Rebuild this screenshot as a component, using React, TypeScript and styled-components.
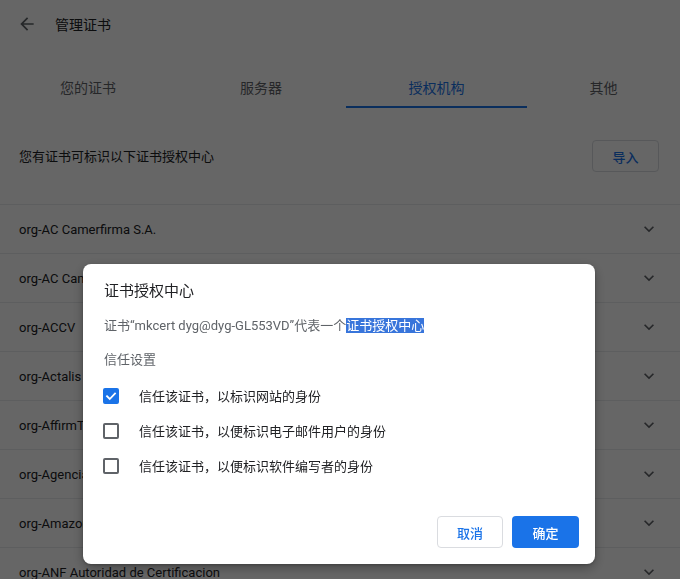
import React, { useState } from 'react'
import styled, { createGlobalStyle } from 'styled-components'

const GlobalStyle = createGlobalStyle`
  html, body {
    margin: 0;
    padding: 0;
    background: #ffffff;
    font-family: Roboto, "Noto Sans CJK SC", sans-serif;
    color: #202124;
    overflow: hidden;
  }
`

const Page = styled.div`
  width: 680px;
  height: 579px;
  overflow: hidden;
  background: #ffffff;
`

const Header = styled.div`
  display: flex;
  align-items: center;
  height: 47px;
  padding-left: 17px;
  gap: 18px;
`

const BackButton = styled.button`
  display: flex;
  align-items: center;
  justify-content: center;
  width: 20px;
  height: 20px;
  padding: 0;
  border: none;
  background: none;
  color: #5f6368;
`

const Title = styled.h1`
  margin: 0;
  font-size: 14px;
  font-weight: 400;
  color: #202124;
`

const Tabs = styled.div`
  display: grid;
  grid-template-columns: 176px 170px 181px 1fr;
  margin-top: 21px;
  height: 40px;
`

const Tab = styled.div<{ $active?: boolean }>`
  display: flex;
  align-items: center;
  justify-content: center;
  font-size: 14px;
  color: ${p => (p.$active ? '#1a73e8' : '#5f6368')};
  border-bottom: 2px solid ${p => (p.$active ? '#1a73e8' : 'transparent')};
  box-sizing: border-box;
`

const Intro = styled.div`
  display: flex;
  align-items: center;
  justify-content: space-between;
  padding: 32px 21px 32px 19px;
`

const IntroText = styled.span`
  font-size: 13px;
  margin-top: -2px;
`

const OutlineButton = styled.button`
  width: 67px;
  height: 32px;
  border: 1px solid #dadce0;
  border-radius: 4px;
  background: #ffffff;
  color: #1a73e8;
  font-family: inherit;
  font-size: 13px;
  font-weight: 500;
`

const List = styled.div`
  border-top: 1px solid #e8eaed;
`

const Row = styled.div`
  display: flex;
  align-items: center;
  justify-content: space-between;
  height: 48px;
  padding: 0 19px;
  border-bottom: 1px solid #e8eaed;
  font-size: 13px;
`

const Chevron = styled.span`
  display: flex;
  width: 24px;
  justify-content: center;
  color: #5f6368;
`

const Overlay = styled.div`
  position: fixed;
  inset: 0;
  background: rgba(0, 0, 0, 0.6);
  display: flex;
  justify-content: center;
  align-items: flex-start;
  padding: 264px 2px 0 0;
`

const Dialog = styled.div`
  width: 512px;
  box-sizing: border-box;
  background: #ffffff;
  border-radius: 8px;
  box-shadow: 0 4px 12px rgba(0, 0, 0, 0.3), 0 1px 3px rgba(0, 0, 0, 0.2);
  padding: 16px 16px 16px 21px;
`

const DialogTitle = styled.div`
  font-size: 15px;
  line-height: 22px;
  color: #202124;
`

const Body = styled.div`
  margin-top: 14px;
  font-size: 13px;
  line-height: 20px;
  color: #5f6368;
`

const Highlight = styled.span`
  background: #3875db;
  color: #ffffff;
`

const Section = styled.div`
  margin-top: 14px;
  font-size: 13px;
  line-height: 20px;
  color: #5f6368;
`

const Options = styled.div`
  margin-top: 8px;
  display: flex;
  flex-direction: column;
`

const Option = styled.label`
  display: flex;
  align-items: center;
  height: 35px;
  gap: 20px;
  font-size: 13px;
  color: #202124;
  cursor: pointer;
`

const Box = styled.span<{ $checked: boolean }>`
  display: flex;
  align-items: center;
  justify-content: center;
  width: 16px;
  height: 16px;
  box-sizing: border-box;
  margin-left: -1px;
  border-radius: 2px;
  border: 2px solid ${p => (p.$checked ? '#1a73e8' : '#5f6368')};
  background: ${p => (p.$checked ? '#1a73e8' : '#ffffff')};
`

const Actions = styled.div`
  display: flex;
  justify-content: flex-end;
  gap: 9px;
  margin-top: 33px;
`

const PrimaryButton = styled.button`
  width: 67px;
  height: 32px;
  border: none;
  border-radius: 4px;
  background: #1a73e8;
  color: #ffffff;
  font-family: inherit;
  font-size: 13px;
  font-weight: 500;
`

const DialogCancel = styled(OutlineButton)`
  width: 66px;
`

const rows = [
  'org-AC Camerfirma S.A.',
  'org-AC Camerfirma SA CIF A82743287',
  'org-ACCV',
  'org-Actalis S.p.A./03358520967',
  'org-AffirmTrust',
  'org-Agencia Catalana de Certificacio',
  'org-Amazon',
  'org-ANF Autoridad de Certificacion',
]

const options = [
  '信任该证书，以标识网站的身份',
  '信任该证书，以便标识电子邮件用户的身份',
  '信任该证书，以便标识软件编写者的身份',
]

const ArrowBack = () => (
  <svg width="20" height="20" viewBox="0 0 24 24" fill="currentColor">
    <path d="M20 11H7.83l5.59-5.59L12 4l-8 8 8 8 1.41-1.41L7.83 13H20v-2z" />
  </svg>
)

const ExpandMore = () => (
  <svg width="20" height="20" viewBox="0 0 24 24" fill="currentColor">
    <path d="M16.59 8.59L12 13.17 7.41 8.59 6 10l6 6 6-6z" />
  </svg>
)

const Check = () => (
  <svg width="12" height="12" viewBox="0 0 24 24" fill="none" stroke="#ffffff" strokeWidth="3.6" strokeLinecap="square">
    <polyline points="4,12.5 9.5,18 20,7" />
  </svg>
)

const App: React.FC = () => {
  const [checked, setChecked] = useState([true, false, false])

  const toggle = (i: number) => setChecked(prev => prev.map((v, j) => (j === i ? !v : v)))

  return (
    <Page>
      <GlobalStyle />
      <Header>
        <BackButton aria-label="back">
          <ArrowBack />
        </BackButton>
        <Title>管理证书</Title>
      </Header>
      <Tabs>
        <Tab>您的证书</Tab>
        <Tab>服务器</Tab>
        <Tab $active>授权机构</Tab>
        <Tab>其他</Tab>
      </Tabs>
      <Intro>
        <IntroText>您有证书可标识以下证书授权中心</IntroText>
        <OutlineButton>导入</OutlineButton>
      </Intro>
      <List>
        {rows.map(r => (
          <Row key={r}>
            <span>{r}</span>
            <Chevron>
              <ExpandMore />
            </Chevron>
          </Row>
        ))}
      </List>
      <Overlay>
        <Dialog>
          <DialogTitle>证书授权中心</DialogTitle>
          <Body>
            证书“mkcert dyg@dyg-GL553VD”代表一个<Highlight>证书授权中心</Highlight>
          </Body>
          <Section>信任设置</Section>
          <Options>
            {options.map((o, i) => (
              <Option key={o} onClick={() => toggle(i)}>
                <Box $checked={checked[i]}>{checked[i] && <Check />}</Box>
                <span>{o}</span>
              </Option>
            ))}
          </Options>
          <Actions>
            <DialogCancel>取消</DialogCancel>
            <PrimaryButton>确定</PrimaryButton>
          </Actions>
        </Dialog>
      </Overlay>
    </Page>
  )
}

export default App
